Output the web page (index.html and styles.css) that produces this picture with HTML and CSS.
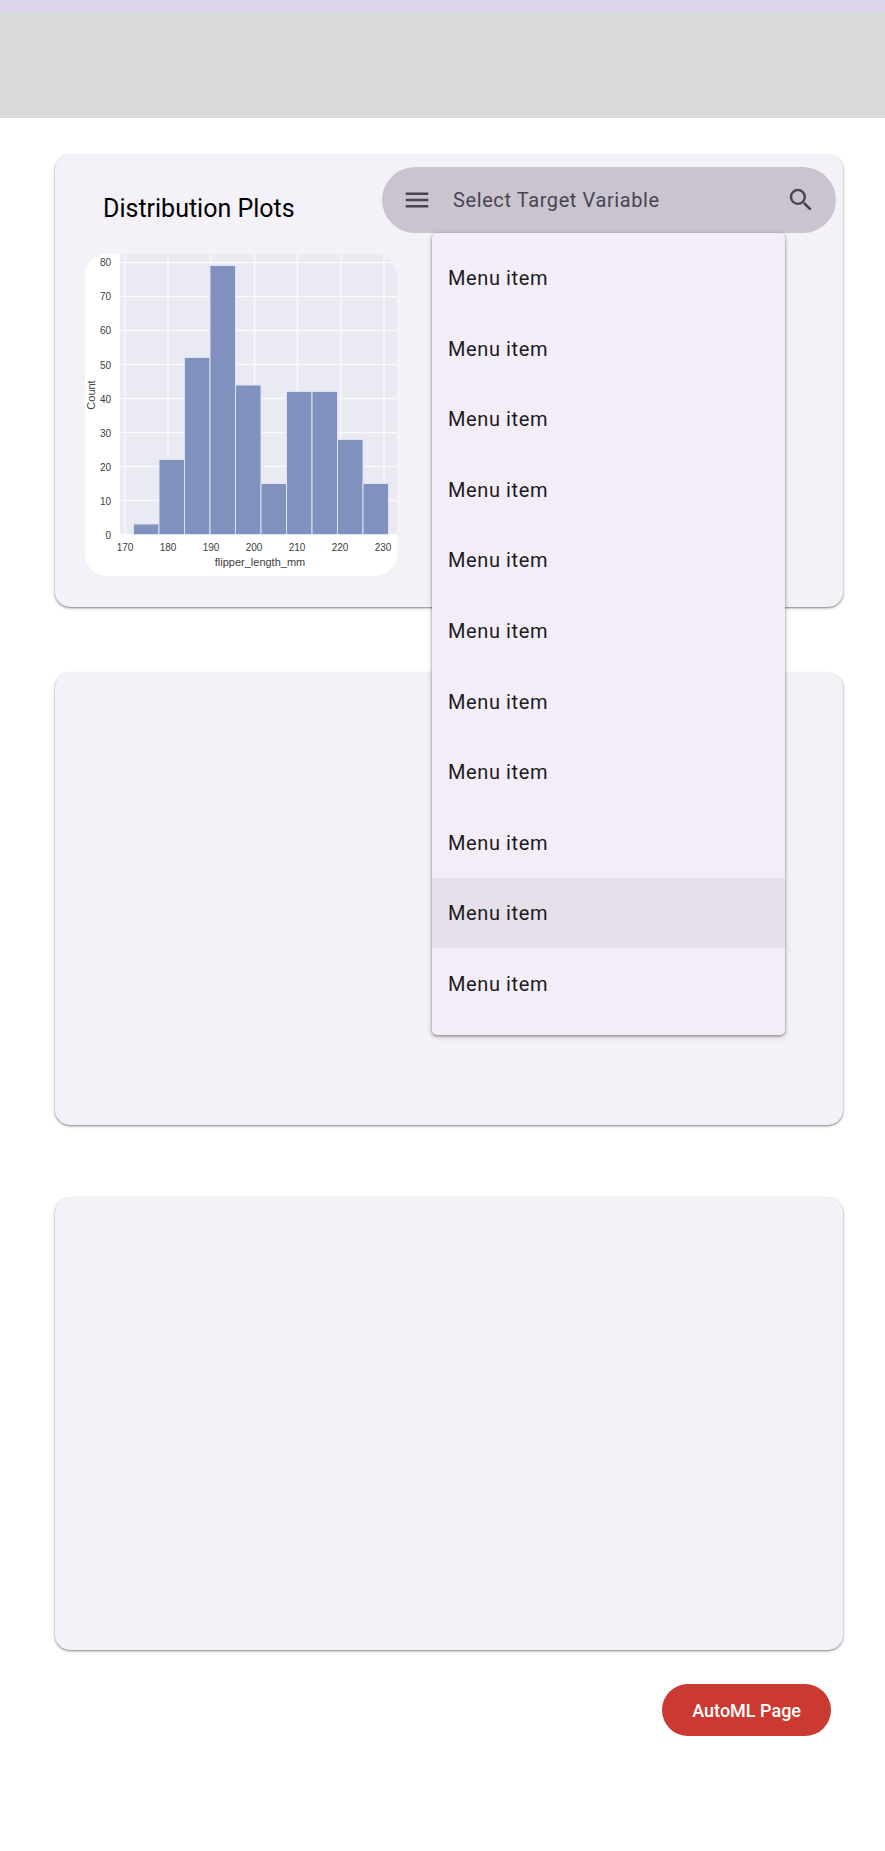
FILE: index.html
```html
<!DOCTYPE html>
<html lang="en">
<head>
<meta charset="utf-8">
<meta name="viewport" content="width=device-width, initial-scale=1">
<title>Distribution Plots</title>
<link rel="stylesheet" href="styles.css">
</head>
<body>
<header class="topbar"></header>
<main class="page">
  <section class="card card-plots">
    <div class="plot-column">
      <h1 class="card-title">Distribution Plots</h1>
      <svg class="chart" viewBox="0 0 312 322" role="img" aria-label="Histogram of flipper_length_mm">
        <rect width="312" height="322" fill="#fff"/>
        <rect x="35" y="0" width="277" height="280" fill="#e9eaf2"/>
        <path d="M40 0V280M83 0V280M126 0V280M169.500 0V280M212.500 0V280M256 0V280M299 0V280M35 8.500H312M35 42.500H312M35 76.500H312M35 110.500H312M35 144.500H312M35 178.500H312M35 212.500H312M35 246.500H312" stroke="#fafafc" stroke-width="1.300" fill="none"/>
        <g fill="#8090bf" stroke="#dfe3f0" stroke-width="1">
          <rect x="48.500" y="270" width="25.500" height="10.500"/>
          <rect x="74" y="205.500" width="25.500" height="75"/>
          <rect x="99.500" y="103.500" width="25.500" height="177"/>
          <rect x="125" y="11.500" width="25.500" height="269"/>
          <rect x="150.500" y="131" width="25.500" height="149.500"/>
          <rect x="176" y="229.500" width="25.500" height="51"/>
          <rect x="201.500" y="137.500" width="25.500" height="143"/>
          <rect x="227" y="137.500" width="25.500" height="143"/>
          <rect x="252.500" y="185.500" width="25.500" height="95"/>
          <rect x="278" y="229.500" width="25.500" height="51"/>
        </g>
        <g class="tick tick-y">
          <text x="26" y="12">80</text><text x="26" y="46">70</text><text x="26" y="80">60</text>
          <text x="26" y="115">50</text><text x="26" y="149">40</text><text x="26" y="183">30</text>
          <text x="26" y="217">20</text><text x="26" y="251">10</text><text x="26" y="285">0</text>
        </g>
        <g class="tick tick-x">
          <text x="40" y="297">170</text><text x="83" y="297">180</text><text x="126" y="297">190</text>
          <text x="169" y="297">200</text><text x="212" y="297">210</text><text x="255" y="297">220</text>
          <text x="298" y="297">230</text>
        </g>
        <text class="axis" x="175" y="312">flipper_length_mm</text>
        <text class="axis" transform="translate(10 141) rotate(-90)">Count</text>
      </svg>
    </div>
    <div class="search">
      <div class="search-bar">
        <button class="icon-button" type="button" aria-label="Open menu">
          <svg viewBox="0 0 24 24" width="30" height="30"><path fill="currentColor" d="M3 18h18v-2H3v2zm0-5h18v-2H3v2zm0-7v2h18V6H3z"/></svg>
        </button>
        <input class="search-input" type="text" placeholder="Select Target Variable" aria-label="Select Target Variable">
        <button class="icon-button" type="button" aria-label="Search">
          <svg viewBox="0 0 24 24" width="30" height="30"><path fill="currentColor" d="M15.500 14h-.79l-.28-.27A6.471 6.471 0 0 0 16 9.500 6.500 6.500 0 1 0 9.500 16c1.610 0 3.090-.59 4.230-1.570l.27.28v.79l5 4.990L20.490 19l-4.990-5zm-6 0C7.010 14 5 11.990 5 9.500S7.010 5 9.500 5 14 7.010 14 9.500 11.990 14 9.500 14z"/></svg>
        </button>
      </div>
      <div class="menu" role="menu">
        <button class="menu-item" type="button" role="menuitem">Menu item</button>
        <button class="menu-item" type="button" role="menuitem">Menu item</button>
        <button class="menu-item" type="button" role="menuitem">Menu item</button>
        <button class="menu-item" type="button" role="menuitem">Menu item</button>
        <button class="menu-item" type="button" role="menuitem">Menu item</button>
        <button class="menu-item" type="button" role="menuitem">Menu item</button>
        <button class="menu-item" type="button" role="menuitem">Menu item</button>
        <button class="menu-item" type="button" role="menuitem">Menu item</button>
        <button class="menu-item" type="button" role="menuitem">Menu item</button>
        <button class="menu-item is-active" type="button" role="menuitem">Menu item</button>
        <button class="menu-item" type="button" role="menuitem">Menu item</button>
      </div>
    </div>
  </section>
  <section class="card card-middle"></section>
  <section class="card"></section>
  <div class="actions">
    <button class="primary-button" type="button">AutoML Page</button>
  </div>
</main>
</body>
</html>
```
FILE: styles.css
```css
* {
  box-sizing: border-box;
}

body {
  margin: 0;
  background: #fff;
  color: #1c1b1f;
  font-family: Roboto, "Liberation Sans", sans-serif;
}

button {
  border: 0;
  font: inherit;
  cursor: pointer;
}

.topbar {
  height: 118px;
  border-top: 11px solid #ddd4eb;
  background: #d9d9d9;
}

.page {
  display: flex;
  flex-direction: column;
  padding: 37px 42px 114px 55px;
}

.card {
  min-height: 452px;
  border-radius: 15px;
  background: #f4f1f9;
  box-shadow: 0 1px 2px rgba(0, 0, 0, 0.4), 0 1px 4px rgba(0, 0, 0, 0.15);
}

.card-plots {
  display: flex;
  justify-content: space-between;
  padding: 12px 7px 30px 30px;
}

.card-middle {
  margin: 66px 0 73px;
}

.plot-column {
  flex: 0 0 312px;
}

.card-title {
  margin: 26px 0 30px 18px;
  color: #000;
  font-size: 25px;
  font-weight: 400;
  line-height: 31px;
}

.chart {
  display: block;
  width: 100%;
  border-radius: 22px;
}

.tick,
.axis {
  fill: #3c3c3c;
  font-family: "Liberation Sans", Arial, sans-serif;
  text-anchor: middle;
}

.tick {
  font-size: 10px;
}

.tick-y {
  text-anchor: end;
}

.axis {
  font-size: 11px;
}

.search {
  position: relative;
  flex: 0 1 454px;
  margin-left: -15px;
}

.search-bar {
  display: flex;
  align-items: center;
  height: 66px;
  padding: 0 20px;
  border-radius: 33px;
  background: #cac4d0;
  color: #49454f;
}

.icon-button {
  display: flex;
  padding: 0;
  background: none;
  color: inherit;
}

.search-input {
  flex: 1;
  min-width: 0;
  padding: 0 21px;
  border: 0;
  outline: 0;
  background: none;
  color: inherit;
  font: 20px/28px Roboto, "Liberation Sans", sans-serif;
  letter-spacing: 0.03em;
}

.search-input::placeholder {
  color: inherit;
  opacity: 1;
}

.menu {
  position: absolute;
  top: 66px;
  right: 51px;
  left: 50px;
  display: grid;
  grid-auto-rows: 1fr;
  min-height: 802px;
  padding: 10px 0 16px;
  border-radius: 5px;
  background: #f3edf7;
  box-shadow: 0 1px 3px rgba(0, 0, 0, 0.4), 0 2px 6px rgba(0, 0, 0, 0.15);
}

.menu-item {
  padding: 0 16px;
  background: none;
  color: #1c1b1f;
  font-size: 20px;
  letter-spacing: 0.03em;
  text-align: left;
}

.menu-item.is-active {
  background: #e5e0e9;
}

.actions {
  display: flex;
  justify-content: flex-end;
  padding: 34px 12px 0;
}

.primary-button {
  height: 52px;
  padding: 0 30px;
  border-radius: 26px;
  background: #cb3a31;
  color: #fff;
  font-size: 18px;
  font-weight: 500;
}
```
